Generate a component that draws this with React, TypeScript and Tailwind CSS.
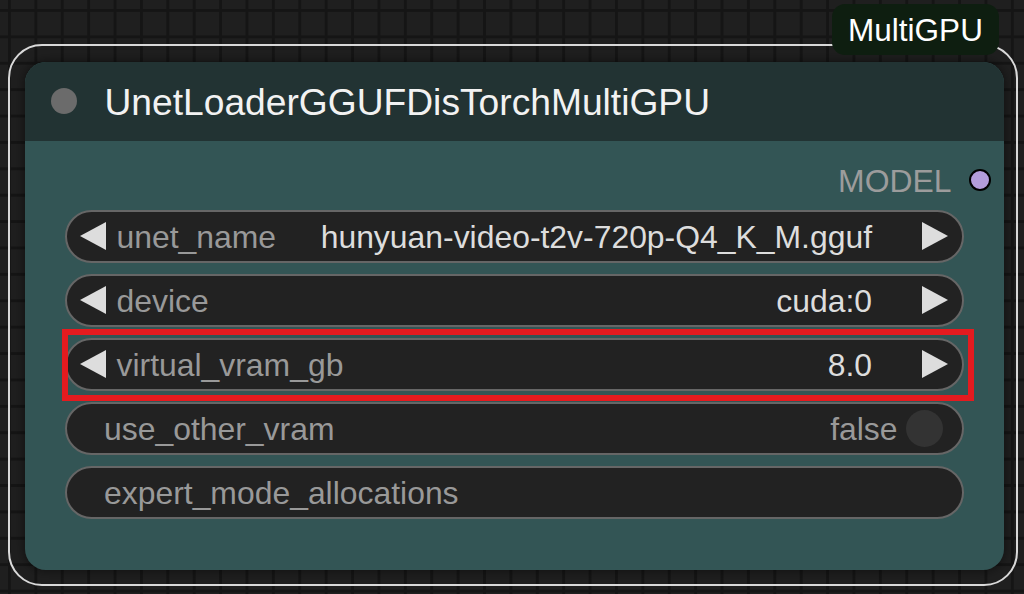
import React from 'react';

function Arrow({ dir }: { dir: 'left' | 'right' }) {
  return (
    <svg width="26" height="28" viewBox="0 0 26 28" className="shrink-0">
      {dir === 'left' ? (
        <polygon points="26,0 0,14 26,28" fill="#dddddd" />
      ) : (
        <polygon points="0,0 26,14 0,28" fill="#dddddd" />
      )}
    </svg>
  );
}

function ComboWidget({ label, value }: { label: string; value: string }) {
  return (
    <div className="flex h-[53px] items-center rounded-full border-[2.5px] border-[#666666] bg-[#222222] pl-[13px] pr-[13.5px] leading-none">
      <Arrow dir="left" />
      <span className="ml-[11px] pt-[3px] text-[#999999]">{label}</span>
      <span className="ml-auto pt-[3px] text-[#dddddd]">{value}</span>
      <span className="ml-[50px]">
        <Arrow dir="right" />
      </span>
    </div>
  );
}

export default function App() {
  return (
    <div className="relative h-[594px] w-[1024px] overflow-hidden bg-[#1f1f1f] bg-[linear-gradient(to_right,#151515_3px,transparent_3px),linear-gradient(to_bottom,#151515_3px,transparent_3px)] bg-[size:26.4px_26.4px] bg-[position:8px_9px] font-['Liberation_Sans',Arial,sans-serif] text-[31.9px]">
      <div className="pl-[8px] pt-[44px]">
        {/* selection outline */}
        <div className="h-[542px] w-[1010px] rounded-[34px] border-[2.5px] border-[#d9d9d9] pl-[14.5px] pt-[15.5px]">
          {/* node */}
          <div className="flex h-[508px] w-[979px] flex-col overflow-hidden rounded-[21px] bg-[#335555] shadow-[0_0_12px_rgba(0,0,0,0.55)]">
            <div className="flex h-[79px] shrink-0 items-center bg-[#223333] pl-[26px]">
              <div className="h-[26px] w-[26px] rounded-full bg-[#6b6b6b]" />
              <span className="ml-[28px] pt-[3px] text-[37.2px] leading-none text-[#f2f2f2]">
                UnetLoaderGGUFDisTorchMultiGPU
              </span>
            </div>
            <div className="flex flex-col pt-[13px]">
              <div className="flex h-[53px] items-center justify-end pr-[13px] leading-none">
                <span className="pt-[3px] text-[#9c9c9c]">MODEL</span>
                <div className="ml-[17px] h-[22px] w-[22px] rounded-full border-2 border-black bg-[#b39ddb]" />
              </div>
              <div className="mt-[3px] flex flex-col gap-[11px] px-[40px]">
                <ComboWidget label="unet_name" value="hunyuan-video-t2v-720p-Q4_K_M.gguf" />
                <ComboWidget label="device" value="cuda:0" />
                <ComboWidget label="virtual_vram_gb" value="8.0" />
                <div className="flex h-[53px] items-center rounded-full border-[2.5px] border-[#666666] bg-[#222222] pl-[37.5px] pr-[19px] leading-none">
                  <span className="pt-[3px] text-[#999999]">use_other_vram</span>
                  <span className="ml-auto pt-[3px] text-[#999999]">false</span>
                  <div className="ml-[8px] h-[37px] w-[37px] rounded-full bg-[#333333]" />
                </div>
                <div className="flex h-[53px] items-center rounded-full border-[2.5px] border-[#666666] bg-[#222222] pl-[37.5px] leading-none">
                  <span className="pt-[3px] text-[#999999]">expert_mode_allocations</span>
                </div>
              </div>
            </div>
          </div>
        </div>
      </div>

      {/* badge */}
      <div className="absolute left-[832px] top-[4px] flex h-[51px] w-[167px] items-center justify-center rounded-[13px] bg-[#0e1e10] pt-[2px] text-[31.5px] leading-none text-white">
        MultiGPU
      </div>

      {/* annotation */}
      <div className="absolute left-[62px] top-[329px] h-[72px] w-[912px] border-[6px] border-[#e41b1f]" />
    </div>
  );
}
